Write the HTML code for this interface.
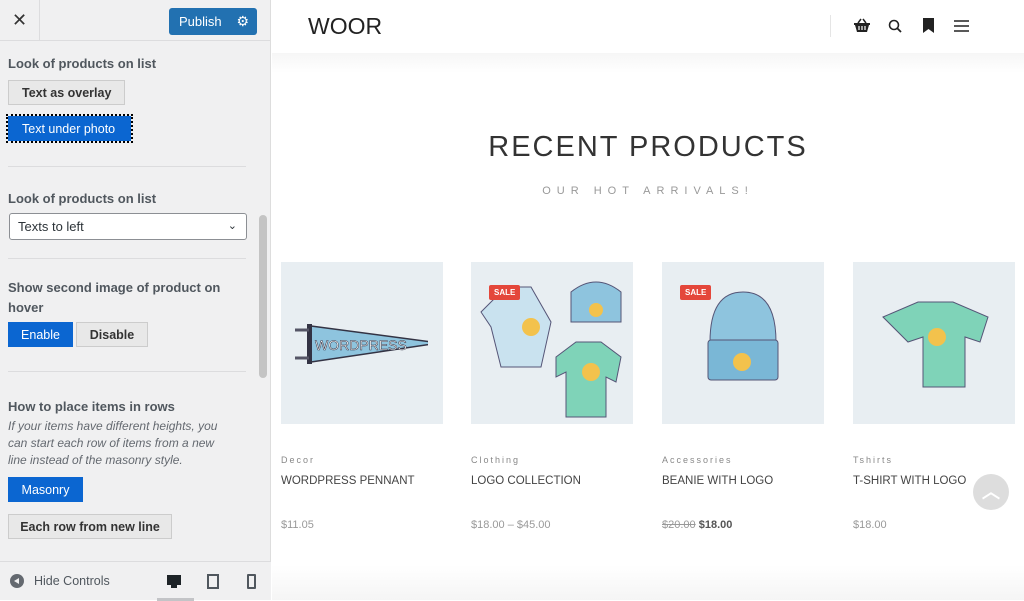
<!DOCTYPE html>
<html><head><meta charset="utf-8"><style>
*{box-sizing:border-box;margin:0;padding:0}
body{width:1024px;height:600px;overflow:hidden;font-family:"Liberation Sans",sans-serif;background:#fff;position:relative}
#side{position:absolute;left:0;top:0;width:271px;height:600px;background:#f0f0f1;border-right:1px solid #ddd}
#top{height:41px;border-bottom:1px solid #dcdcde;position:relative}
#close{position:absolute;left:0;top:0;width:40px;height:40px;border-right:1px solid #dcdcde;font-size:18px;line-height:40px;text-align:center;color:#333}
#pub{position:absolute;left:169px;top:8px;width:88px;height:27px;background:#2271b1;border-radius:3px;color:#fff;font-size:13px;line-height:27px;padding-left:10px}
#pub span{position:absolute;right:8px;top:0;font-size:14px}
.lbl{position:absolute;left:8px;font-size:13px;font-weight:bold;color:#50575e}
.btn{position:absolute;height:25px;font-size:12.5px;line-height:24px;padding:0 13px;border:1px solid #ccc;background:#e8e8e8;color:#333;font-weight:bold}
.on{background:#0b66d1;color:#fff;border-color:#0b66d1;font-weight:normal}
.hr{position:absolute;left:8px;width:238px;height:1px;background:#dcdcde}
#scroll{position:absolute;left:259px;top:215px;width:8px;height:163px;background:#c4c4c4;border-radius:4px}
#foot{position:absolute;left:0;top:561px;width:271px;height:39px;border-top:1px solid #dcdcde;background:#f0f0f1}
#main{position:absolute;left:272px;top:0;width:752px;height:600px;background:#fff}
#hdr{height:53px;background:#fff;position:relative;z-index:2}
.p{position:absolute;top:262px;width:162px}
.img{width:162px;height:162px;background:#e8eef2;position:relative}
.cat{font-size:9px;letter-spacing:2px;color:#888;margin-top:31px}
.nm{font-size:11.5px;color:#444;margin-top:10px;height:44px}
.pr{font-size:11px;color:#999}
.sale{position:absolute;top:23px;left:18px;background:#e4473b;color:#fff;font-size:8px;font-weight:bold;padding:3px 5px;border-radius:2px}
</style></head><body>
<div id="side">
<div id="top"><div id="close">✕</div><div id="pub">Publish<span>⚙</span></div></div>
<div class="lbl" style="top:56px">Look of products on list</div>
<div class="btn" style="left:8px;top:80px">Text as overlay</div>
<div class="btn on" style="left:8px;top:116px;width:123px;outline:2px dotted #000">Text under photo</div>
<div class="hr" style="top:166px"></div>
<div class="lbl" style="top:191px">Look of products on list</div>
<div style="position:absolute;left:9px;top:213px;width:238px;height:27px;background:#fff;border:1px solid #8c8f94;border-radius:3px;font-size:13px;line-height:25px;padding-left:8px;color:#2c3338">Texts to left<span style="position:absolute;right:9px;top:0;font-size:11px">⌄</span></div>
<div class="hr" style="top:258px"></div>
<div class="lbl" style="top:278px;line-height:20px">Show second image of product on<br>hover</div>
<div class="btn on" style="left:8px;top:322px;width:65px;text-align:center;padding:0">Enable</div>
<div class="btn" style="left:76px;top:322px;width:72px;text-align:center;padding:0">Disable</div>
<div class="hr" style="top:371px"></div>
<div class="lbl" style="top:399px">How to place items in rows</div>
<div style="position:absolute;left:8px;top:418px;font-size:12px;font-style:italic;color:#646970;line-height:17px">If your items have different heights, you<br>can start each row of items from a new<br>line instead of the masonry style.</div>
<div class="btn on" style="left:8px;top:477px;width:75px;text-align:center;padding:0">Masonry</div>
<div class="btn" style="left:8px;top:514px;width:164px;text-align:center;padding:0">Each row from new line</div>
<div id="scroll"></div>
<div id="foot">
<div style="position:absolute;left:10px;top:12px;width:14px;height:14px;border-radius:50%;background:#646970"></div>
<div style="position:absolute;left:14px;top:16px;width:0;height:0;border-top:3px solid transparent;border-bottom:3px solid transparent;border-right:5px solid #f0f0f1"></div>
<div style="position:absolute;left:34px;top:12px;font-size:12.5px;color:#50575e">Hide Controls</div>
<div style="position:absolute;left:167px;top:13px;width:14px;height:10px;background:#1d2327"></div>
<div style="position:absolute;left:171px;top:23px;width:6px;height:3px;background:#1d2327"></div>
<div style="position:absolute;left:157px;top:36px;width:37px;height:3px;background:#c3c4c7"></div>
<div style="position:absolute;left:207px;top:12px;width:12px;height:15px;border:2px solid #50575e"></div>
<div style="position:absolute;left:247px;top:12px;width:9px;height:15px;border:2px solid #50575e;border-radius:1px"></div>
</div>
</div>
<div id="main">
<div id="hdr">
<div style="position:absolute;left:36px;top:13px;font-size:23px;color:#222">WOOR</div>
<div style="position:absolute;left:558px;top:15px;width:1px;height:22px;background:#e5e5e5"></div>
<svg style="position:absolute;left:582px;top:18px" width="16" height="14" viewBox="0 0 16 14"><path d="M0 5h16v2h-1l-2 7H3L1 7H0z" fill="#222"/><path d="M4 5l3-4M12 5L9 1" stroke="#222" stroke-width="1.5" fill="none"/><path d="M5 8v4M8 8v4M11 8v4" stroke="#fff" stroke-width="1.2"/></svg>
<svg style="position:absolute;left:616px;top:19px" width="14" height="14" viewBox="0 0 14 14"><circle cx="6" cy="6" r="4.5" stroke="#222" stroke-width="1.6" fill="none"/><path d="M9.5 9.5L13 13" stroke="#222" stroke-width="1.8"/></svg>
<svg style="position:absolute;left:651px;top:18px" width="11" height="15" viewBox="0 0 11 15"><path d="M0 0h11v15l-5.5-4L0 15z" fill="#222"/></svg>
<svg style="position:absolute;left:682px;top:20px" width="15" height="12" viewBox="0 0 15 12"><path d="M0 1h15M0 6h15M0 11h15" stroke="#222" stroke-width="1.6"/></svg>
</div>
<div style="position:absolute;left:0;top:53px;width:752px;height:20px;background:linear-gradient(#f6f6f6,#fff)"></div>
<div style="position:absolute;left:0;top:131px;width:752px;text-align:center;font-size:29px;letter-spacing:2px;color:#333">RECENT PRODUCTS</div>
<div style="position:absolute;left:0;top:185px;width:752px;text-align:center;font-size:11px;letter-spacing:6px;color:#999">OUR HOT ARRIVALS!</div>
<div class="p" style="left:9px"><div class="img"><svg style="position:absolute;left:12px;top:58px" width="135" height="46"><path d="M18 6L146 23 18 42z" fill="#8ec4de" stroke="#334" stroke-width="1.5"/><rect x="14" y="4" width="5" height="40" fill="#334"/><path d="M2 10h14M2 38h14" stroke="#556" stroke-width="3"/><text x="22" y="30" font-size="14" font-family="Liberation Sans" fill="#fff" stroke="#334" stroke-width=".5">WORDPRESS</text></svg></div><div class="cat">Decor</div><div class="nm">WORDPRESS PENNANT</div><div class="pr">$11.05</div></div>
<div class="p" style="left:199px"><div class="img"><svg style="position:absolute;left:0;top:0" width="162" height="162"><path d="M10 50l25-25h25l20 35-10 45H30l-10-40z" fill="#c9e2ef" stroke="#557" stroke-width="1"/><path d="M100 30q25-20 50 0v30h-50z" fill="#8ec4de" stroke="#557"/><path d="M85 95l20-15h25l20 15-5 25-10-5v40H95v-45l-10 5z" fill="#7fd3b8" stroke="#557"/><circle cx="60" cy="65" r="9" fill="#f3c24c"/><circle cx="125" cy="48" r="7" fill="#f3c24c"/><circle cx="120" cy="110" r="9" fill="#f3c24c"/></svg><div class="sale">SALE</div></div><div class="cat">Clothing</div><div class="nm">LOGO COLLECTION</div><div class="pr">$18.00 – $45.00</div></div>
<div class="p" style="left:390px"><div class="img"><svg style="position:absolute;left:0;top:0" width="162" height="162"><path d="M48 80q0-50 33-50t33 50z" fill="#8ec4de" stroke="#557"/><rect x="46" y="78" width="70" height="40" rx="3" fill="#7ab7d6" stroke="#557"/><circle cx="80" cy="100" r="9" fill="#f3c24c"/></svg><div class="sale">SALE</div></div><div class="cat">Accessories</div><div class="nm">BEANIE WITH LOGO</div><div class="pr"><s>$20.00</s> <b style="color:#555">$18.00</b></div></div>
<div class="p" style="left:581px"><div class="img"><svg style="position:absolute;left:0;top:0" width="162" height="162"><path d="M30 55l35-15h35l35 15-8 25-15-5v50H70V75l-15 5z" fill="#7fd3b8" stroke="#557"/><circle cx="84" cy="75" r="9" fill="#f3c24c"/></svg></div><div class="cat">Tshirts</div><div class="nm">T-SHIRT WITH LOGO</div><div class="pr">$18.00</div></div>
<div style="position:absolute;left:701px;top:474px;width:36px;height:36px;border-radius:50%;background:#ddd;color:#fff;text-align:center;font-size:18px;line-height:36px;font-weight:bold">︿</div>
<div style="position:absolute;left:0;top:565px;width:752px;height:35px;background:linear-gradient(#fff,#f5f5f5)"></div>
</div>
</body></html>
